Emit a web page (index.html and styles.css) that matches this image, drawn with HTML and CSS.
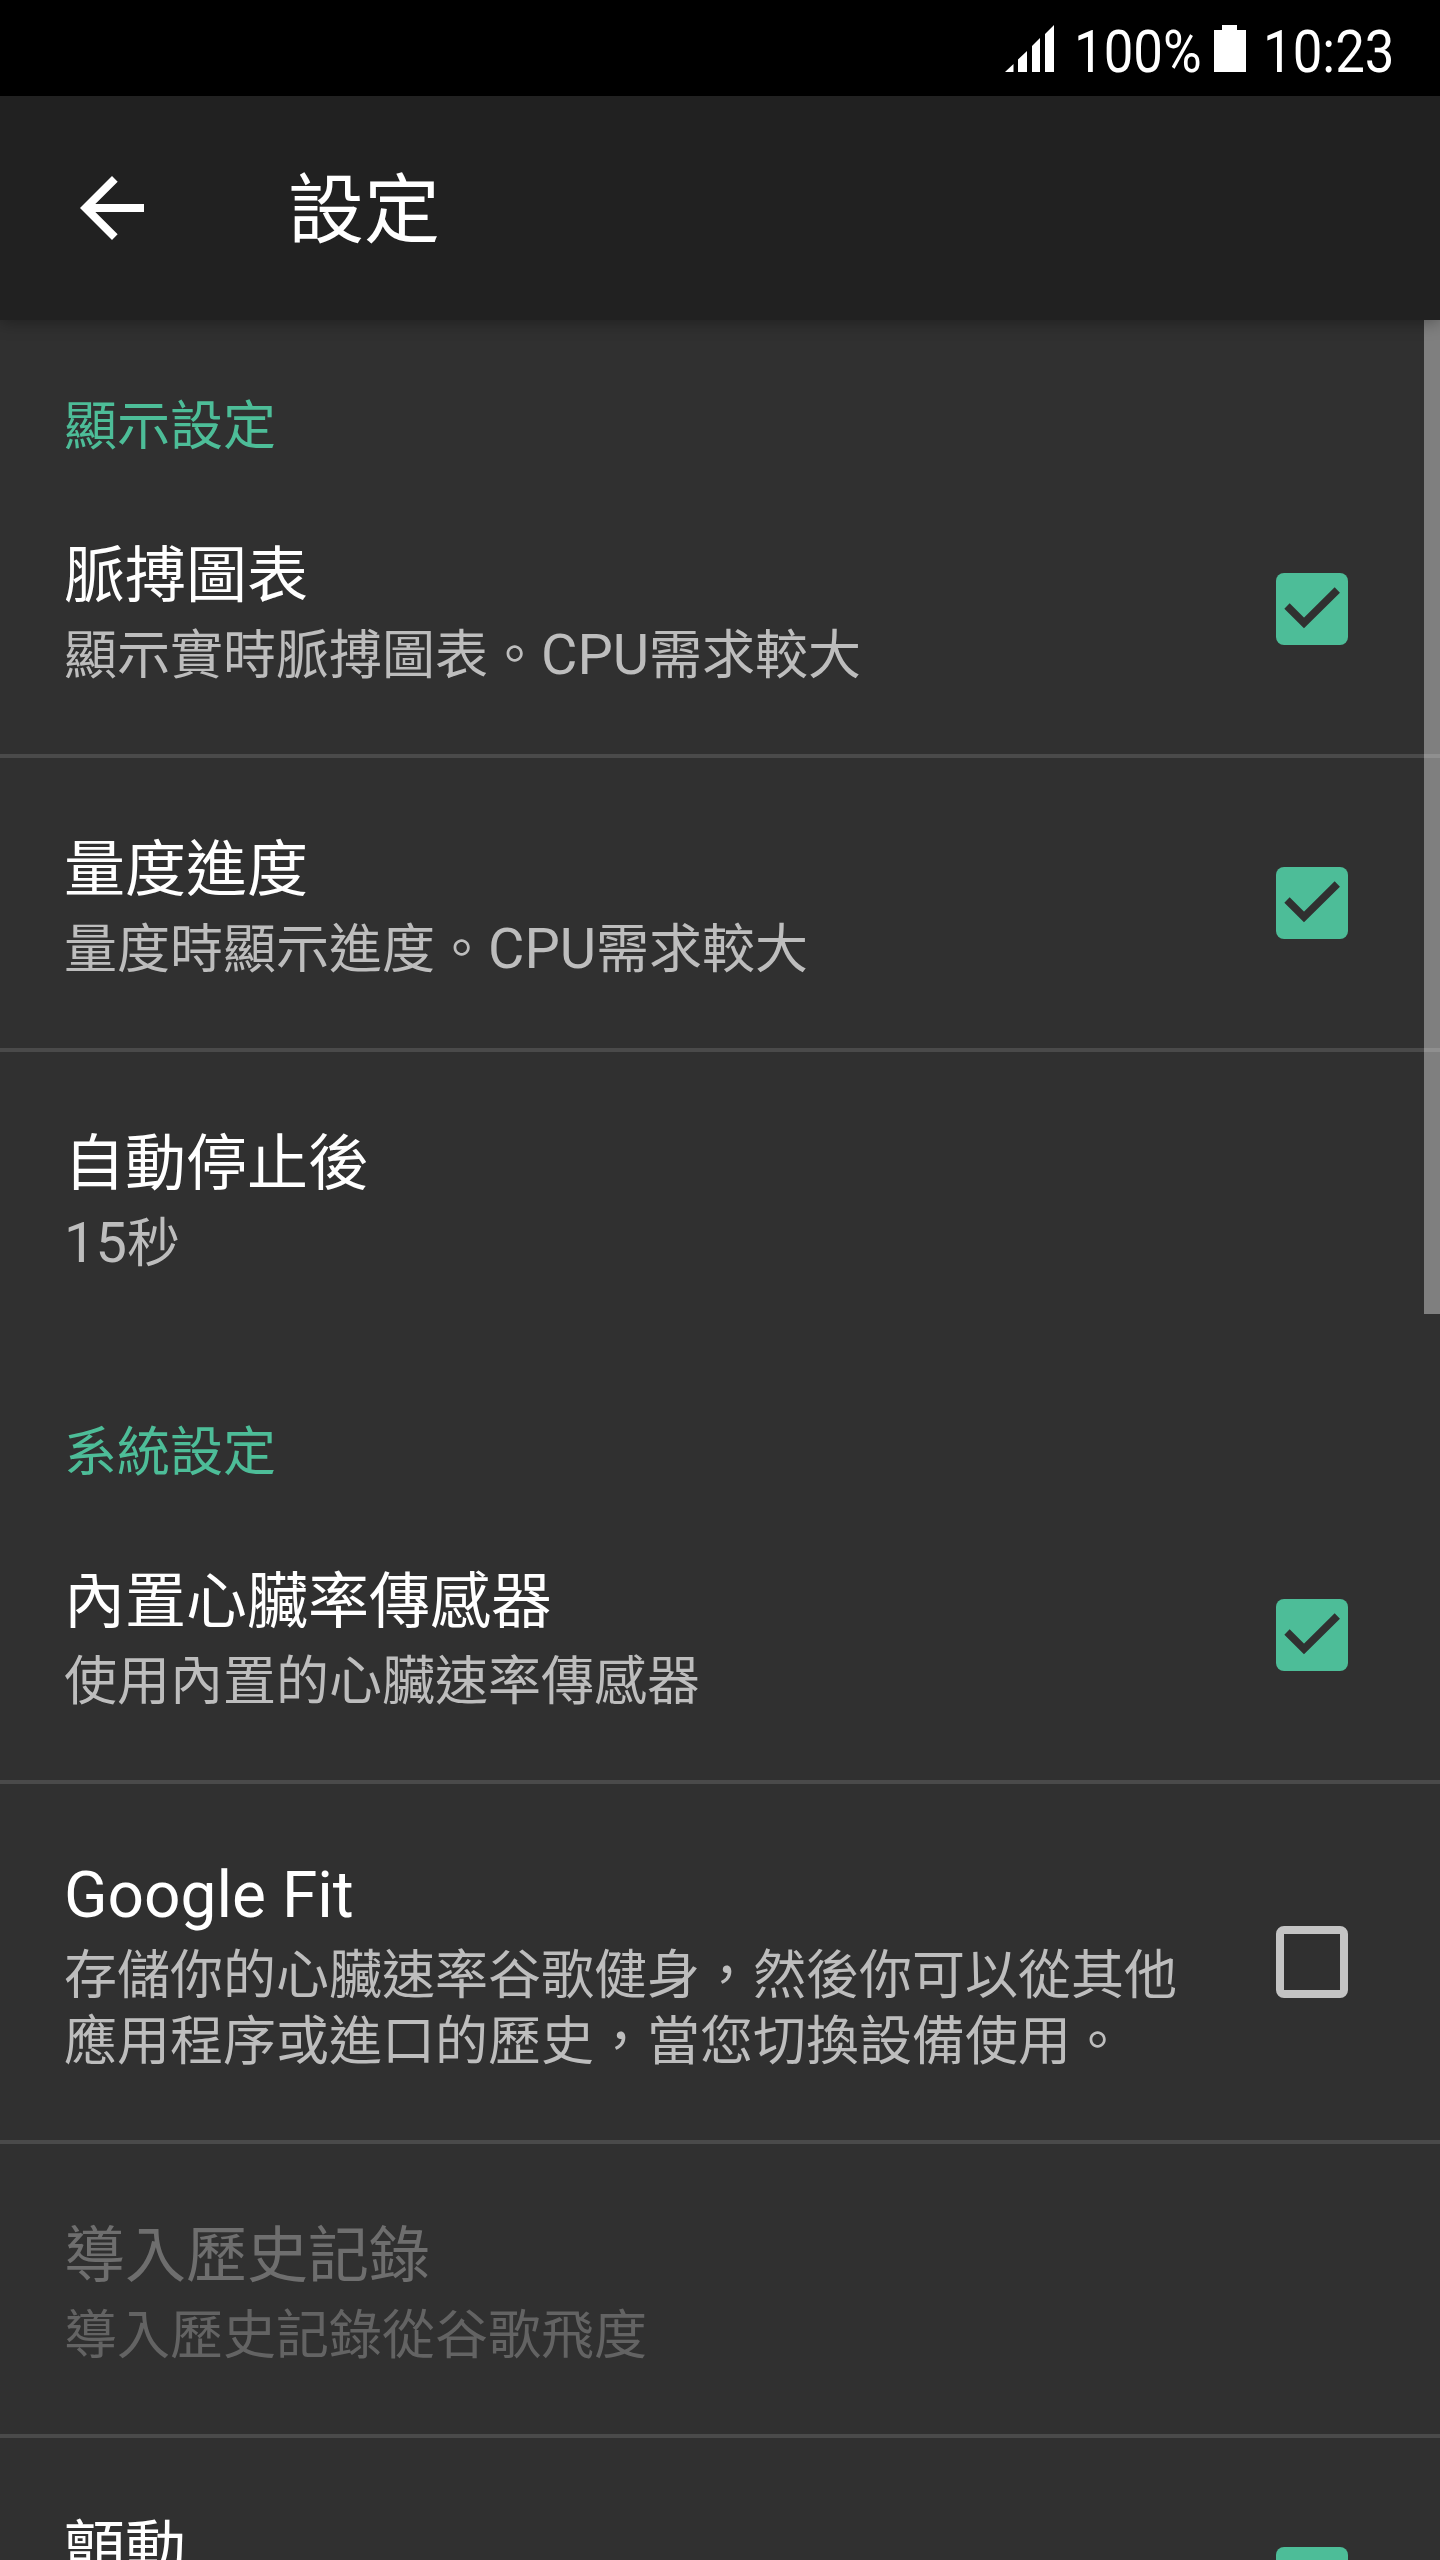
FILE: index.html
```html
<!DOCTYPE html>
<html lang="zh-Hant">
<head>
<meta charset="utf-8">
<title>設定</title>
<link rel="stylesheet" href="styles.css">
</head>
<body>
<div class="screen">
  <div class="status">
    <svg class="signal" viewBox="0 0 49 47" aria-hidden="true"><path d="M0 47 8.5 39V47ZM13 34.5 22 26V47H13ZM27 21 35 13V47H27ZM40 9 49 0V47H40Z"/></svg>
    <span class="status-text pct">100%</span>
    <svg class="battery" viewBox="0 0 32 47" aria-hidden="true"><path d="M8 0H23V5H32V47H0V5H8Z"/></svg>
    <span class="status-text clock">10:23</span>
  </div>
  <header class="appbar">
    <svg class="back" viewBox="0 0 24 24" aria-hidden="true"><path d="M20 11H7.83l5.59-5.59L12 4l-8 8 8 8 1.41-1.41L7.83 13H20v-2z"/></svg>
    <h1 class="appbar-title">設定</h1>
  </header>
  <main class="list">
    <h2 class="section">顯示設定</h2>
    <div class="row">
      <div class="text"><p class="title">脈搏圖表</p><p class="sub">顯示實時脈搏圖表。<span class="latin">CPU</span>需求較大</p></div>
      <span class="box on"><svg viewBox="0 0 72 72" aria-hidden="true"><path d="M11 33 28 50 61.3 17"/></svg></span>
    </div>
    <div class="row">
      <div class="text"><p class="title">量度進度</p><p class="sub">量度時顯示進度。<span class="latin">CPU</span>需求較大</p></div>
      <span class="box on"><svg viewBox="0 0 72 72" aria-hidden="true"><path d="M11 33 28 50 61.3 17"/></svg></span>
    </div>
    <div class="row last">
      <div class="text"><p class="title">自動停止後</p><p class="sub"><span class="latin">15</span>秒</p></div>
    </div>
    <h2 class="section">系統設定</h2>
    <div class="row">
      <div class="text"><p class="title">內置心臟率傳感器</p><p class="sub">使用內置的心臟速率傳感器</p></div>
      <span class="box on"><svg viewBox="0 0 72 72" aria-hidden="true"><path d="M11 33 28 50 61.3 17"/></svg></span>
    </div>
    <div class="row">
      <div class="text"><p class="title title-latin">Google Fit</p><p class="sub">存儲你的心臟速率谷歌健身，然後你可以從其他應用程序或進口的歷史，當您切換設備使用。</p></div>
      <span class="box off"></span>
    </div>
    <div class="row disabled">
      <div class="text"><p class="title">導入歷史記錄</p><p class="sub">導入歷史記錄從谷歌飛度</p></div>
    </div>
    <div class="row">
      <div class="text"><p class="title">顫動</p><p class="sub">&nbsp;</p></div>
      <span class="box on"><svg viewBox="0 0 72 72" aria-hidden="true"><path d="M11 33 28 50 61.3 17"/></svg></span>
    </div>
  </main>
  <div class="scrollbar"></div>
</div>
</body>
</html>
```
FILE: styles.css
```css
* { box-sizing: border-box; margin: 0; padding: 0; }
html, body { height: 2560px; overflow: hidden; background: #303030; }
body { font-family: Roboto, "Noto Sans CJK TC", sans-serif; color: #fff; }
.screen { position: relative; width: 1440px; height: 2560px; overflow: hidden; background: #303030; }

.status { height: 96px; background: #000; display: flex; align-items: flex-start; padding: 25px 48px 0 1005px; }
.signal { width: 49px; height: 47px; fill: #fff; flex: none; }
.battery { width: 32px; height: 47px; fill: #fff; flex: none; margin-left: 18px; }
.status-text { font-size: 60px; line-height: 53px; font-weight: 400; color: #fff; display: inline-block; flex: none; transform-origin: 0 50%; transform: scaleX(.88); white-space: nowrap; }
.pct { width: 122px; margin-left: 20px; }
.clock { width: 127px; margin-left: 17px; }

.appbar { position: relative; z-index: 2; height: 224px; background: #212121; display: flex; align-items: center; padding-left: 64px; box-shadow: 0 2px 16px rgba(0,0,0,.35); }
.back { width: 96px; height: 96px; fill: #fff; flex: none; }
.appbar-title { font-size: 76px; line-height: 102px; font-weight: 400; margin-left: 128px; padding-top: 6px; color: #fff; }

.section { height: 144px; padding: 74px 0 0 64px; font-size: 53px; line-height: 66px; font-weight: 400; color: #4dbd98; }
.row { display: grid; grid-template-columns: 1fr 72px; column-gap: 80px; align-items: center; min-height: 294px; padding: 65px 92px 65px 64px; border-bottom: 4px solid #4a4a4a; }
.row.last { border-bottom: 0; padding-bottom: 69px; }
.title { font-size: 61px; line-height: 94px; height: 94px; color: #fff; }
.title-latin { font-size: 64px; }
.sub { font-size: 53px; line-height: 66px; color: #bdbdbd; }
.latin { font-size: 56px; line-height: 0; }
.disabled .title { color: #6e6e6e; }
.disabled .sub { color: #636363; }

.box { display: block; width: 72px; height: 72px; border-radius: 8px; }
.box.on { background: #4dbd98; }
.box.on svg { display: block; width: 72px; height: 72px; fill: none; stroke: #303030; stroke-width: 7.5; }
.box.off { border: 8px solid #c4c4c4; }

.scrollbar { position: absolute; top: 320px; right: 0; width: 16px; height: 994px; background: rgba(255,255,255,.386); }
```
